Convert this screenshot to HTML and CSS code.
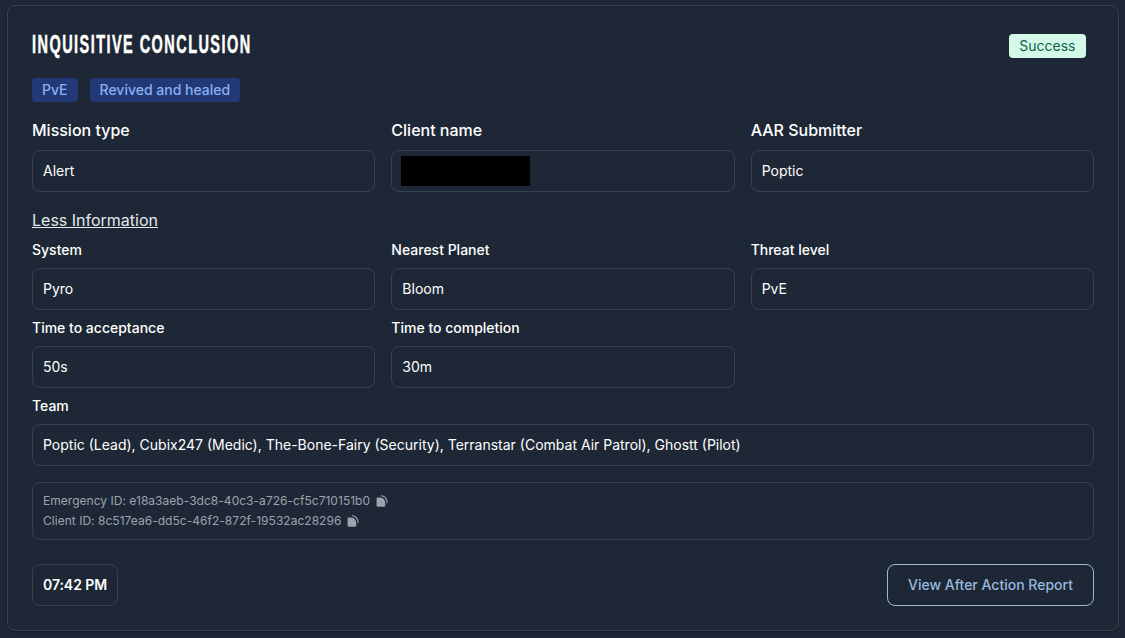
FILE: index.html
```html
<!DOCTYPE html>
<html lang="en">
<head>
    <meta charset="UTF-8">
    <meta name="viewport" content="width=device-width, initial-scale=1.0">
    <title>Inquisitive Conclusion</title>
    <link rel="stylesheet" href="styles.css">
</head>
<body>
    <div class="card">
        <div class="card-head">
            <h2 class="title">INQUISITIVE CONCLUSION</h2>
            <span class="status">Success</span>
        </div>
        <div class="tags">
            <span class="tag">PvE</span>
            <span class="tag">Revived and healed</span>
        </div>
        <div class="grid main-grid">
            <div class="group">
                <label class="label-lg">Mission type</label>
                <div class="field">Alert</div>
            </div>
            <div class="group">
                <label class="label-lg">Client name</label>
                <div class="field"><span class="redacted"></span></div>
            </div>
            <div class="group">
                <label class="label-lg">AAR Submitter</label>
                <div class="field">Poptic</div>
            </div>
        </div>
        <a class="toggle" href="#">Less Information</a>
        <div class="grid">
            <div class="group">
                <label>System</label>
                <div class="field">Pyro</div>
            </div>
            <div class="group">
                <label>Nearest Planet</label>
                <div class="field">Bloom</div>
            </div>
            <div class="group">
                <label>Threat level</label>
                <div class="field">PvE</div>
            </div>
            <div class="group">
                <label>Time to acceptance</label>
                <div class="field">50s</div>
            </div>
            <div class="group">
                <label>Time to completion</label>
                <div class="field">30m</div>
            </div>
            <div class="group wide">
                <label>Team</label>
                <div class="field">Poptic (Lead), Cubix247 (Medic), The-Bone-Fairy (Security), Terranstar (Combat Air Patrol), Ghostt (Pilot)</div>
            </div>
        </div>
        <div class="ids">
            <div class="id-row">Emergency ID: e18a3aeb-3dc8-40c3-a726-cf5c710151b0
                <svg class="copy" viewBox="1 1 10.4 10.6"><path d="M5.6 1.2c3 .2 5.4 2.6 5.6 6 0 .7-.3 1.2-.9 1.4 0-3.6-1.7-6-4.9-6.5-.2-.4-.1-.8.2-.9z"/><path d="M2.4 3.2h2.2c2.4.2 4.3 2 4.5 4.7v2.4c0 .7-.4 1-1 1H2.4c-.6 0-1-.3-1-1V4.2c0-.6.4-1 1-1z"/></svg>
            </div>
            <div class="id-row">Client ID: 8c517ea6-dd5c-46f2-872f-19532ac28296
                <svg class="copy" viewBox="1 1 10.4 10.6"><path d="M5.6 1.2c3 .2 5.4 2.6 5.6 6 0 .7-.3 1.2-.9 1.4 0-3.6-1.7-6-4.9-6.5-.2-.4-.1-.8.2-.9z"/><path d="M2.4 3.2h2.2c2.4.2 4.3 2 4.5 4.7v2.4c0 .7-.4 1-1 1H2.4c-.6 0-1-.3-1-1V4.2c0-.6.4-1 1-1z"/></svg>
            </div>
        </div>
        <div class="card-foot">
            <div class="time">07:42 PM</div>
            <button class="report-btn" type="button">View After Action Report</button>
        </div>
    </div>
</body>
</html>
```

FILE: styles.css
```css
body {
    margin: 0;
    height: 638px;
    overflow: hidden;
    background: #1e2735;
    font-family: Inter, "Liberation Sans", sans-serif;
    color: #fff;
    padding: 5px 6px 0 7px;
    box-sizing: border-box;
}
.card {
    box-sizing: border-box;
    height: 626px;
    padding: 24px;
    background: #1e2735;
    border: 1px solid #374151;
    border-radius: 8px;
    box-shadow: 0 1px 3px rgba(0, 0, 0, 0.3);
}
.card-head {
    display: flex;
    justify-content: space-between;
    align-items: flex-start;
    height: 32px;
    padding: 0 8px 0 0;
    margin-bottom: 16px;
}
.title {
    margin: 0;
    font-family: "Liberation Sans", sans-serif;
    font-size: 25px;
    line-height: 28px;
    font-weight: 700;
    letter-spacing: 2.5px;
    transform: scaleX(0.58);
    transform-origin: left center;
    white-space: nowrap;
    -webkit-text-stroke: 0.5px #fff;
}
.status {
    margin-top: 4px;
    background: #d5f9e8;
    color: #0b5f4a;
    font-size: 14px;
    line-height: 24px;
    padding: 0 10.5px;
    border-radius: 4px;
}
.tags {
    display: flex;
    gap: 12px;
    margin-bottom: 16px;
}
.tag {
    background: #233876;
    color: #8ab0f0;
    font-size: 14px;
    font-weight: 500;
    line-height: 24px;
    padding: 0 10px;
    border-radius: 4px;
}
.grid {
    display: grid;
    grid-template-columns: repeat(3, 1fr);
    gap: 8px 16px;
}
.main-grid {
    margin-bottom: 16px;
}
.wide {
    grid-column: 1 / -1;
}
label {
    display: block;
    font-size: 14px;
    font-weight: 500;
    line-height: 20px;
    margin-bottom: 8px;
}
.label-lg {
    font-size: 16px;
    line-height: 24px;
    margin-bottom: 8px;
}
.field {
    box-sizing: border-box;
    height: 42px;
    padding: 0 10px 2px;
    display: flex;
    align-items: center;
    border: 1px solid #374151;
    border-radius: 8px;
    font-size: 14px;
}
.redacted {
    width: 129px;
    height: 30px;
    margin-top: 2px;
    margin-left: -1px;
    background: #000;
}
.toggle {
    display: block;
    width: max-content;
    color: #e5e7eb;
    font-size: 16px;
    line-height: 24px;
    margin-bottom: 8px;
}
.ids {
    box-sizing: border-box;
    height: 58px;
    margin-top: 16px;
    padding: 8px 10px;
    border: 1px solid #374151;
    border-radius: 8px;
    font-size: 12px;
    line-height: 20px;
    letter-spacing: 0.03px;
    color: #9ca3af;
}
.id-row {
    display: flex;
    align-items: center;
    gap: 6px;
}
.copy {
    width: 12px;
    height: 12px;
    fill: #9ca3af;
}
.card-foot {
    display: flex;
    justify-content: space-between;
    margin-top: 24px;
}
.time {
    box-sizing: border-box;
    height: 42px;
    width: 86px;
    padding: 0 10px 2px;
    display: flex;
    align-items: center;
    border: 1px solid #374151;
    border-radius: 8px;
    font-size: 14px;
    font-weight: 600;
    letter-spacing: -0.05px;
    white-space: nowrap;
}
.report-btn {
    width: 207px;
    height: 42px;
    padding: 0 0 2px;
    background: transparent;
    border: 1px solid #9db8d6;
    border-radius: 8px;
    color: #98b9df;
    font-family: inherit;
    font-size: 14px;
    font-weight: 500;
    cursor: pointer;
}
```
